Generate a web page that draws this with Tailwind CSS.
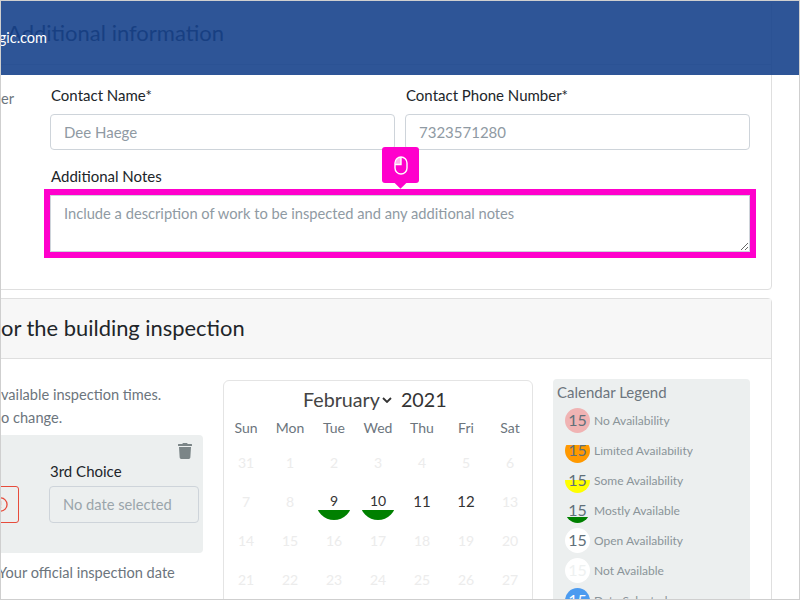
<!DOCTYPE html>
<html>
<head>
  <meta charset="UTF-8">
  <meta name="viewport" content="width=device-width, initial-scale=1.0">
  <title>Inspection request</title>
  <script src="https://cdn.jsdelivr.net/npm/@tailwindcss/browser@4"></script>
</head>
<body class="bg-white font-['Lato',sans-serif] text-[#212529]">
  <div class="relative w-[800px] h-[600px] overflow-hidden border border-[#cfcfcf]">

    <!-- site header sits over the page -->
    <div class="absolute left-0 top-0 z-20 w-full h-[74px] bg-[#17428c]/90">
      <div class="w-[46px] h-full flex justify-end items-center overflow-hidden">
        <span class="text-white text-[14.5px] whitespace-nowrap">ogic.com</span>
      </div>
    </div>

    <div class="-ml-[20px] w-[791px] -mt-[1px]">
      <!-- additional information card -->
      <section class="border border-[#dfdfdf] rounded-[4px] h-[290px] flex flex-col">
        <div class="h-[64px] shrink-0 pt-[14px] bg-[#f7f7f7] border-b border-[#dfdfdf] text-[22px] leading-[36px] whitespace-nowrap pl-[25px]">Additional information</div>
        <div class="flex flex-1">
          <div class="w-[68px] shrink-0 pt-[23px] pl-[19px] text-[14.6px] text-[#6c757d]">er</div>
          <div class="flex-1 pt-[19px] pr-[21px]">
            <div class="flex gap-[10px]">
              <label class="flex-1 block">
                <span class="block pl-[1px] text-[15px] leading-[22px] mb-[8px]">Contact Name*</span>
                <input class="w-full h-[36px] px-[13px] border border-[#ced4da] rounded-[4px] text-[15px] placeholder:text-[#8f9aa3]" placeholder="Dee Haege">
              </label>
              <label class="flex-1 block">
                <span class="block pl-[1px] text-[15px] leading-[22px] mb-[8px]">Contact Phone Number*</span>
                <input class="w-full h-[36px] px-[13px] border border-[#ced4da] rounded-[4px] text-[15px] placeholder:text-[#8f9aa3]" placeholder="7323571280">
              </label>
            </div>
            <div class="relative mt-[15px]">
              <span class="block pl-[1px] text-[15px] leading-[22px] mb-[8px]">Additional Notes</span>
              <textarea class="block w-full h-[57px] px-[13px] py-[6px] border border-[#ced4da] rounded-none text-[14.7px] placeholder:text-[#8f9aa3] outline-6 outline-[#ff00cc]" placeholder="Include a description of work to be inspected and any additional notes"></textarea>
              <!-- highlight tooltip -->
              <div class="absolute left-[332px] -top-[18px] w-[37px] h-[36px] bg-[#ff00cc] rounded-[3px] flex items-center justify-center">
                <svg width="14" height="19" viewBox="0 0 14 19" fill="none" stroke="white" stroke-width="1.400">
                  <path d="M7 1.500V8H1.500V6.500Q2 1.800 7 1.500Z" fill="#ffb0ef" stroke="none"/>
                  <rect x="1" y="1" width="12" height="17" rx="6"/>
                  <path d="M7 1v7.500H1"/>
                </svg>
                <div class="absolute left-[14px] -bottom-[4px] w-[9px] h-[9px] rotate-45 bg-[#ff00cc]"></div>
              </div>
            </div>
          </div>
        </div>
      </section>

      <!-- inspection schedule card -->
      <section class="mt-[8px] border border-[#dfdfdf] rounded-[4px] h-[320px]">
        <div class="h-[60px] bg-[#f7f7f7] border-b border-[#dfdfdf] pt-[11px] pl-[19px] text-[21.9px] leading-[36px]">or the building inspection</div>
        <div class="flex">
          <div class="w-[221px] shrink-0 pt-[25px] text-[14.6px] text-[#6c757d] leading-[22.500px] whitespace-nowrap">
            <div class="pl-[19px]">vailable inspection times.</div>
            <div class="pl-[19px]">o change.</div>
            <div class="mt-[6px] ml-[10px] h-[118px] bg-[#ecefef] rounded-[4px] relative">
              <div class="absolute right-[11px] top-[8px] text-[#7b8587]">
                <svg width="14" height="16" viewBox="0 0 448 512" fill="currentColor"><path d="M432 32H312l-9-19A24 24 0 0 0 281 0H167a24 24 0 0 0-22 13l-9 19H16A16 16 0 0 0 0 48v32a16 16 0 0 0 16 16h416a16 16 0 0 0 16-16V48a16 16 0 0 0-16-16zM53 467a48 48 0 0 0 48 45h246a48 48 0 0 0 48-45l21-339H32z"/></svg>
              </div>
              <div class="flex gap-[30px] pt-[25px]">
                <div class="mt-[26px] w-[27px] h-[37px] border border-[#e74c3c] rounded-[3px] flex items-center justify-end pr-[10px] text-[#e74c3c]">
                  <svg class="shrink-0" width="15" height="15" viewBox="0 0 16 16" fill="none" stroke="currentColor" stroke-width="1.400"><circle cx="8" cy="8" r="7"/><path d="M8 4v5M8 10.500v1.500"/></svg>
                </div>
                <div class="w-[150px]">
                  <div class="pl-[1px] text-[15px] leading-[22px] text-[#212529] mb-[4px]">3rd Choice</div>
                  <div class="h-[37px] border border-[#ced4da] rounded-[4px] px-[13px] flex items-center text-[14.7px] text-[#9aa5ab]">No date selected</div>
                </div>
              </div>
            </div>
            <div class="mt-[9px] pl-[16px]">Your official inspection date</div>
          </div>

          <!-- calendar -->
          <div class="w-[310px] h-[260px] shrink-0 mt-[21px] border border-[#e4e4e4] rounded-[6px] ml-[20px] -mb-[20px]">
            <div class="flex items-center h-[35px] pt-[2px] pl-[79px] text-[19.7px] text-[#444]">
              <span>February</span>
              <svg class="ml-[2px] mr-[9px]" width="10" height="6" viewBox="0 0 10 6" fill="none" stroke="#333" stroke-width="1.800"><path d="M1 1l4 4 4-4"/></svg>
              <span class="text-[#333]">2021</span>
            </div>
            <div class="grid grid-cols-7 w-[308px] text-center">
              <div class="h-[27px] pt-[1px] text-[14px] text-[#6c757d]">Sun</div>
              <div class="h-[27px] pt-[1px] text-[14px] text-[#6c757d]">Mon</div>
              <div class="h-[27px] pt-[1px] text-[14px] text-[#6c757d]">Tue</div>
              <div class="h-[27px] pt-[1px] text-[14px] text-[#6c757d]">Wed</div>
              <div class="h-[27px] pt-[1px] text-[14px] text-[#6c757d]">Thu</div>
              <div class="h-[27px] pt-[1px] text-[14px] text-[#6c757d]">Fri</div>
              <div class="h-[27px] pt-[1px] text-[14px] text-[#6c757d]">Sat</div>

              <div class="h-[39px] flex items-center justify-center text-[14px] text-[#ececec]">31</div>
              <div class="h-[39px] flex items-center justify-center text-[14px] text-[#ececec]">1</div>
              <div class="h-[39px] flex items-center justify-center text-[14px] text-[#ececec]">2</div>
              <div class="h-[39px] flex items-center justify-center text-[14px] text-[#ececec]">3</div>
              <div class="h-[39px] flex items-center justify-center text-[14px] text-[#ececec]">4</div>
              <div class="h-[39px] flex items-center justify-center text-[14px] text-[#ececec]">5</div>
              <div class="h-[39px] flex items-center justify-center text-[14px] text-[#ececec]">6</div>

              <div class="h-[39px] flex items-center justify-center text-[14px] text-[#ececec]">7</div>
              <div class="h-[39px] flex items-center justify-center text-[14px] text-[#ececec]">8</div>
              <div class="h-[39px] flex items-center justify-center"><span class="w-[36px] h-[36px] pb-[2px] rounded-full flex items-center justify-center text-[14px] text-[#333] bg-[linear-gradient(transparent_26px,#008000_26px)]">9</span></div>
              <div class="h-[39px] flex items-center justify-center"><span class="w-[36px] h-[36px] pb-[2px] rounded-full flex items-center justify-center text-[14px] text-[#333] bg-[linear-gradient(transparent_26px,#008000_26px)]">10</span></div>
              <div class="h-[39px] flex items-center justify-center text-[15px] text-[#333]">11</div>
              <div class="h-[39px] flex items-center justify-center text-[15px] text-[#333]">12</div>
              <div class="h-[39px] flex items-center justify-center text-[14px] text-[#ececec]">13</div>

              <div class="h-[39px] flex items-center justify-center text-[14px] text-[#ececec]">14</div>
              <div class="h-[39px] flex items-center justify-center text-[14px] text-[#ececec]">15</div>
              <div class="h-[39px] flex items-center justify-center text-[14px] text-[#ececec]">16</div>
              <div class="h-[39px] flex items-center justify-center text-[14px] text-[#ececec]">17</div>
              <div class="h-[39px] flex items-center justify-center text-[14px] text-[#ececec]">18</div>
              <div class="h-[39px] flex items-center justify-center text-[14px] text-[#ececec]">19</div>
              <div class="h-[39px] flex items-center justify-center text-[14px] text-[#ececec]">20</div>

              <div class="h-[39px] flex items-center justify-center text-[14px] text-[#ececec]">21</div>
              <div class="h-[39px] flex items-center justify-center text-[14px] text-[#ececec]">22</div>
              <div class="h-[39px] flex items-center justify-center text-[14px] text-[#ececec]">23</div>
              <div class="h-[39px] flex items-center justify-center text-[14px] text-[#ececec]">24</div>
              <div class="h-[39px] flex items-center justify-center text-[14px] text-[#ececec]">25</div>
              <div class="h-[39px] flex items-center justify-center text-[14px] text-[#ececec]">26</div>
              <div class="h-[39px] flex items-center justify-center text-[14px] text-[#ececec]">27</div>
            </div>
          </div>

          <!-- legend -->
          <div class="w-[197px] h-[260px] shrink-0 mt-[20px] ml-[20px] bg-[#ecefef] rounded-[4px] pl-[4px]">
            <div class="h-[26px] pt-[2px] text-[15px] leading-[22px] text-[#6c757d]">Calendar Legend</div>
            <div class="flex items-center h-[30px] pl-[8px]"><span class="w-[25px] h-[25px] rounded-full flex items-center justify-center bg-[#f0b3b3] text-[16px] text-[#60707a]">15</span><span class="ml-[4px] mt-[2px] text-[12px] text-[#8a9499]">No Availability</span></div>
            <div class="flex items-center h-[30px] pl-[8px]"><span class="w-[25px] h-[25px] rounded-full flex items-center justify-center bg-[linear-gradient(transparent_7px,#ff9900_7px)] text-[16px] text-[#60707a]">15</span><span class="ml-[4px] mt-[6px] h-[12px] overflow-hidden flex items-end text-[12px] leading-[16px] text-[#8a9499]">Limited Availability</span></div>
            <div class="flex items-center h-[30px] pl-[8px]"><span class="w-[25px] h-[25px] rounded-full flex items-center justify-center bg-[linear-gradient(transparent_12px,#ffff00_12px)] text-[16px] text-[#60707a]">15</span><span class="ml-[4px] mt-[2px] text-[12px] text-[#8a9499]">Some Availability</span></div>
            <div class="flex items-center h-[30px] pl-[8px]"><span class="w-[25px] h-[25px] rounded-full flex items-center justify-center bg-[linear-gradient(transparent_19px,#008000_19px)] text-[16px] text-[#60707a]">15</span><span class="ml-[4px] mt-[2px] text-[12px] text-[#8a9499]">Mostly Available</span></div>
            <div class="flex items-center h-[30px] pl-[8px]"><span class="w-[25px] h-[25px] rounded-full flex items-center justify-center bg-white text-[16px] text-[#60707a]">15</span><span class="ml-[4px] mt-[2px] text-[12px] text-[#8a9499]">Open Availability</span></div>
            <div class="flex items-center h-[30px] pl-[8px]"><span class="w-[25px] h-[25px] rounded-full flex items-center justify-center bg-white text-[16px] text-[#eef1f1]">15</span><span class="ml-[4px] mt-[2px] text-[12px] text-[#8a9499]">Not Available</span></div>
            <div class="flex items-center h-[30px] pl-[8px]"><span class="w-[25px] h-[25px] rounded-full flex items-center justify-center bg-[#4c9bf0] text-[16px] text-white">15</span><span class="ml-[4px] mt-[2px] text-[12px] text-[#8a9499]">Date Selected</span></div>
          </div>
        </div>
      </section>
    </div>
  </div>
</body>
</html>
